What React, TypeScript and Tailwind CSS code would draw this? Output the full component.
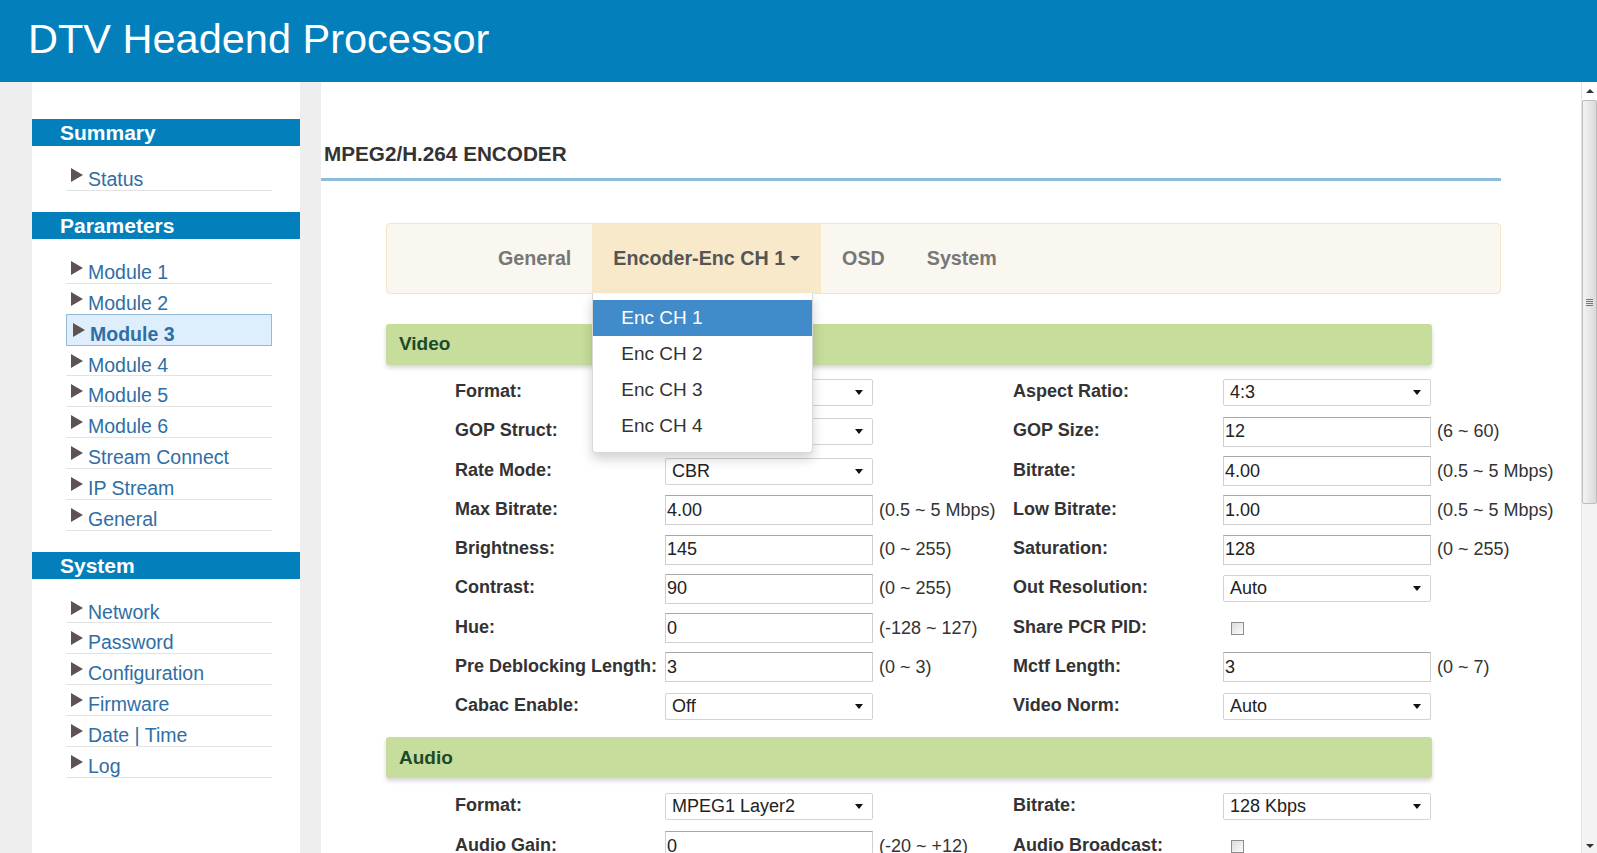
import React from "react"

const FONT = { fontFamily: '"Liberation Sans", Arial, sans-serif' }

type Field =
  | { label: string; kind: "select"; value: string }
  | { label: string; kind: "input"; value: string; hint?: string }
  | { label: string; kind: "check" }

const videoLeft: Field[] = [
  { label: "Format:", kind: "select", value: "H.264" },
  { label: "GOP Struct:", kind: "select", value: "IBBP" },
  { label: "Rate Mode:", kind: "select", value: "CBR" },
  { label: "Max Bitrate:", kind: "input", value: "4.00", hint: "(0.5 ~ 5 Mbps)" },
  { label: "Brightness:", kind: "input", value: "145", hint: "(0 ~ 255)" },
  { label: "Contrast:", kind: "input", value: "90", hint: "(0 ~ 255)" },
  { label: "Hue:", kind: "input", value: "0", hint: "(-128 ~ 127)" },
  { label: "Pre Deblocking Length:", kind: "input", value: "3", hint: "(0 ~ 3)" },
  { label: "Cabac Enable:", kind: "select", value: "Off" },
]

const videoRight: Field[] = [
  { label: "Aspect Ratio:", kind: "select", value: "4:3" },
  { label: "GOP Size:", kind: "input", value: "12", hint: "(6 ~ 60)" },
  { label: "Bitrate:", kind: "input", value: "4.00", hint: "(0.5 ~ 5 Mbps)" },
  { label: "Low Bitrate:", kind: "input", value: "1.00", hint: "(0.5 ~ 5 Mbps)" },
  { label: "Saturation:", kind: "input", value: "128", hint: "(0 ~ 255)" },
  { label: "Out Resolution:", kind: "select", value: "Auto" },
  { label: "Share PCR PID:", kind: "check" },
  { label: "Mctf Length:", kind: "input", value: "3", hint: "(0 ~ 7)" },
  { label: "Video Norm:", kind: "select", value: "Auto" },
]

const audioLeft: Field[] = [
  { label: "Format:", kind: "select", value: "MPEG1 Layer2" },
  { label: "Audio Gain:", kind: "input", value: "0", hint: "(-20 ~ +12)" },
]

const audioRight: Field[] = [
  { label: "Bitrate:", kind: "select", value: "128 Kbps" },
  { label: "Audio Broadcast:", kind: "check" },
]

const menu = [
  { title: "Summary", items: ["Status"] },
  { title: "Parameters", items: ["Module 1", "Module 2", "Module 3", "Module 4", "Module 5", "Module 6", "Stream Connect", "IP Stream", "General"] },
  { title: "System", items: ["Network", "Password", "Configuration", "Firmware", "Date | Time", "Log"] },
]

function Bullet() {
  return (
    <svg width="12" height="14" viewBox="0 0 12 14" className="mt-[8px] shrink-0">
      <polygon points="0,0 12,7 0,14" fill="#5e5353" />
    </svg>
  )
}

function Caret() {
  return (
    <svg width="8" height="5" viewBox="0 0 8 5" className="shrink-0">
      <polygon points="0,0 8,0 4,5" fill="#111" />
    </svg>
  )
}

function Control({ f }: { f: Field }) {
  if (f.kind === "select") {
    return (
      <div className="flex h-[27px] w-[208px] items-center justify-between rounded-[2px] border border-[#d3d3d3] bg-white pl-[6px] pr-[9px] text-[18px] text-[#222]">
        <span>{f.value}</span>
        <Caret />
      </div>
    )
  }
  if (f.kind === "check") {
    return (
      <div className="ml-[8px] h-[13px] w-[13px] border border-[#8e8e8e] bg-gradient-to-br from-[#dcdcdc] to-[#fbfbfb]" />
    )
  }
  return (
    <div className="flex h-[30px] w-[208px] items-center border border-[#cfcfcf] border-t-[#a8a8a8] bg-white pl-[1px] text-[18px] text-[#222]">
      {f.value}
    </div>
  )
}

function Cell({ f }: { f: Field }) {
  return (
    <>
      <div className="pb-[2px] text-[18px] font-bold text-[#333]">{f.label}</div>
      <Control f={f} />
      <div className="pl-[6px] text-[18px] text-[#333]">{f.kind === "input" ? f.hint : ""}</div>
    </>
  )
}

function Rows({ left, right }: { left: Field[]; right: Field[] }) {
  return (
    <div className="pl-[69px]">
      {left.map((f, i) => (
        <div key={i} className="grid h-[39.25px] grid-cols-[210px_208px_140px_210px_208px_1fr] items-center whitespace-nowrap">
          <Cell f={f} />
          <Cell f={right[i]} />
        </div>
      ))}
    </div>
  )
}

function SectionBar({ title }: { title: string }) {
  return (
    <div className="flex h-[41px] w-[1046px] items-center rounded-[3px] bg-[#c7dd9b] pl-[13px] text-[19px] font-bold text-[#1d4a2a] shadow-[0_3px_4px_rgba(0,0,0,0.16)]">
      {title}
    </div>
  )
}

function Sidebar() {
  return (
    <div className="w-[268px] shrink-0 bg-white pt-[37px]">
      {menu.map((s, si) => (
        <div key={s.title} className={si > 0 ? "mt-[21px]" : ""}>
          <div className="h-[27px] bg-[#0380bc] pl-[28px] text-[21px] font-bold leading-[27px] text-white">{s.title}</div>
          <div className="ml-[34px] mt-[14px] w-[206px]">
            {s.items.map((it) =>
              it === "Module 3" ? (
                <div key={it} className="-mt-px flex h-[32px] gap-[5px] border border-[#95bad6] bg-[#dfeefd] pl-[6px]">
                  <Bullet />
                  <span className="mt-[9px] text-[19.5px] font-bold leading-[20px] text-[#2f6ea5]">{it}</span>
                </div>
              ) : (
                <div key={it} className="flex h-[30.85px] gap-[5px] border-b border-[#e2e2e2] pl-[5px]">
                  <Bullet />
                  <span className="mt-[9px] text-[19.5px] leading-[20px] text-[#2f6ea5]">{it}</span>
                </div>
              )
            )}
          </div>
        </div>
      ))}
    </div>
  )
}

function Tabs() {
  return (
    <div className="flex h-[71px] w-[1115px] items-stretch rounded-[4px] border border-[#f3e5c6] bg-[#faf7f0] pl-[90px] text-[19.7px] font-bold">
      <div className="flex items-center px-[21px] text-[#777]">General</div>
      <div className="relative flex items-center gap-[5px] bg-[#f9e9cb] px-[21px] text-[#555]">
        <span>Encoder-Enc CH 1</span>
        <svg width="10" height="5" viewBox="0 0 10 5">
          <polygon points="0,0 10,0 5,5" fill="#555" />
        </svg>
        <div className="absolute left-0 top-full z-10 w-[221px] rounded-b-[4px] border border-t-0 border-[#d9d9d9] bg-white pb-[8px] pt-[7px] font-normal shadow-[0_6px_12px_rgba(0,0,0,0.18)]">
          {["Enc CH 1", "Enc CH 2", "Enc CH 3", "Enc CH 4"].map((c, i) => (
            <div
              key={c}
              className={
                i === 0
                  ? "flex h-[36px] items-center bg-[#428bca] pl-[28px] text-[19px] text-white"
                  : "flex h-[36px] items-center pl-[28px] text-[19px] text-[#333]"
              }
            >
              {c}
            </div>
          ))}
        </div>
      </div>
      <div className="flex items-center px-[21px] text-[#777]">OSD</div>
      <div className="flex items-center px-[21px] text-[#777]">System</div>
    </div>
  )
}

function Scrollbar() {
  return (
    <div className="flex w-[16px] shrink-0 flex-col border-l border-[#e4e4e4] bg-[#f3f3f3]">
      <div className="flex h-[18px] items-center justify-center bg-white">
        <svg width="8" height="4" viewBox="0 0 8 4">
          <polygon points="0,4 8,4 4,0" fill="#333" />
        </svg>
      </div>
      <div className="flex h-[404px] items-center justify-center rounded-[2px] border border-[#bdbdbd] bg-gradient-to-r from-[#f4f4f4] to-[#d9d9d9]">
        <div className="flex flex-col gap-[1px]">
          <div className="h-px w-[7px] bg-[#777]" />
          <div className="h-px w-[7px] bg-[#777]" />
          <div className="h-px w-[7px] bg-[#777]" />
          <div className="h-px w-[7px] bg-[#777]" />
        </div>
      </div>
      <div className="flex-1" />
      <div className="flex h-[14px] items-center justify-center">
        <svg width="8" height="4" viewBox="0 0 8 4">
          <polygon points="0,0 8,0 4,4" fill="#333" />
        </svg>
      </div>
    </div>
  )
}

export default function App() {
  return (
    <div className="flex h-[853px] w-[1597px] flex-col overflow-hidden bg-[#eeeeee]" style={FONT}>
      <div className="h-[82px] shrink-0 bg-[#0380bc] pl-[28px] pt-[14px] text-[41.5px] leading-[50px] text-white">
        DTV Headend Processor
      </div>
      <div className="flex min-h-0 flex-1">
        <div className="w-[32px] shrink-0" />
        <Sidebar />
        <div className="w-[21px] shrink-0" />
        <div className="min-w-0 flex-1 bg-white">
          <div className="mt-[60px] pl-[3px] text-[20.7px] font-bold leading-[24px] text-[#333]">MPEG2/H.264 ENCODER</div>
          <div className="mt-[12px] h-[3px] w-[1180px] bg-[#8dbcd8]" />
          <div className="ml-[65px] mt-[42px]">
            <Tabs />
            <div className="mt-[30px]">
              <SectionBar title="Video" />
            </div>
            <div className="mt-[8px]">
              <Rows left={videoLeft} right={videoRight} />
            </div>
            <div className="mt-[11px]">
              <SectionBar title="Audio" />
            </div>
            <div className="mt-[9px]">
              <Rows left={audioLeft} right={audioRight} />
            </div>
          </div>
        </div>
        <Scrollbar />
      </div>
    </div>
  )
}
